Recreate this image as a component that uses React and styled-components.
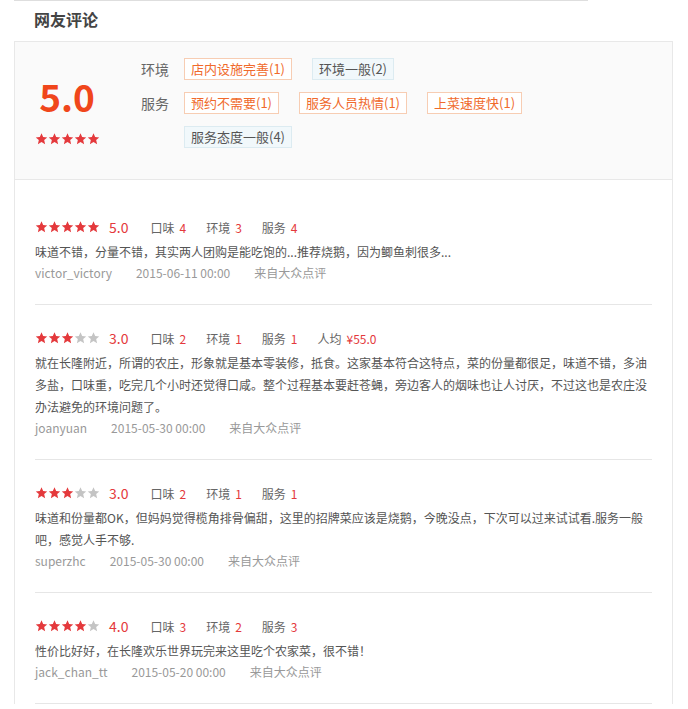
import React from "react";
import styled, { createGlobalStyle } from "styled-components";

const GlobalStyle = createGlobalStyle`
  body {
    margin: 0;
    background: #fff;
    font-family: "Noto Sans CJK SC", "Liberation Sans", sans-serif;
    color: #666;
  }
`;

const Page = styled.div`
  width: 659px;
  padding-left: 14px;
`;

const TopRule = styled.div`
  width: 574px;
  height: 1px;
  background: #dedede;
`;

const Title = styled.h2`
  margin: 0;
  padding: 6px 0 0 20px;
  height: 34px;
  line-height: 24px;
  font-size: 16px;
  font-weight: bold;
  color: #444;
`;

const Panel = styled.div`
  border: 1px solid #e8e8e8;
  border-bottom: none;
`;

const Summary = styled.div`
  display: flex;
  align-items: flex-start;
  gap: 42px;
  padding: 16px 20px 31px;
  background: #fafafa;
  border-bottom: 1px solid #e8e8e8;
`;

const ScoreBox = styled.div`
  width: 64px;
  display: flex;
  flex-direction: column;
  align-items: center;
  gap: 17px;
  margin-top: 18px;
`;

const BigScore = styled.div`
  font-size: 37px;
  line-height: 40px;
  font-weight: bold;
  color: #f0461b;
`;

const Tags = styled.div`
  display: flex;
  flex-direction: column;
  gap: 12px;
`;

const TagRow = styled.div`
  display: flex;
  align-items: flex-start;
`;

const TagLabel = styled.span`
  width: 43px;
  flex-shrink: 0;
  font-size: 14px;
  line-height: 22px;
  color: #666;
`;

const TagWrap = styled.div`
  display: flex;
  flex-wrap: wrap;
  max-width: 380px;
  row-gap: 12px;
`;

const Tag = styled.span`
  box-sizing: border-box;
  height: 22px;
  line-height: 20px;
  padding: 0 6px;
  margin-right: 20px;
  font-size: 13px;
  border: 1px solid ${(p) => (p.$neutral ? "#dcebf1" : "#f7cdb3")};
  background: ${(p) => (p.$neutral ? "#f1f8fb" : "#fff")};
  color: ${(p) => (p.$neutral ? "#555" : "#f06a2c")};
`;

const List = styled.div`
  padding: 14px 20px 0;
`;

const Review = styled.div`
  padding: 23px 0 21px;
  border-bottom: 1px solid #e6e6e6;
`;

const Head = styled.div`
  display: flex;
  align-items: center;
  height: 20px;
  font-size: 12px;
`;

const Stars = styled.span`
  display: inline-flex;
`;

const Score = styled.span`
  margin: 0 22px 0 9px;
  font-size: 14px;
  color: #e4393c;
`;

const Item = styled.span`
  margin-right: 20px;
  color: #666;
  b {
    font-weight: normal;
    color: #e4393c;
    margin-left: 5px;
  }
`;

const Body = styled.p`
  margin: 4px 0 0;
  font-size: 12px;
  line-height: 22px;
  color: #555;
`;

const Meta = styled.div`
  display: flex;
  gap: 24px;
  font-size: 12px;
  line-height: 20px;
  color: #999;
`;

const Star = ({ on, size = 13 }) => (
  <svg width={size} height={size - 1} viewBox="0 0 24 23">
    <path
      d="M12 0.5l3.2 7.2 7.8.7-5.9 5.2 1.8 7.8L12 17.3l-6.9 4.1 1.8-7.8L1 8.4l7.8-.7z"
      fill={on ? "#e4393c" : "#c4c4c4"}
    />
  </svg>
);

const StarBar = ({ n, size }) => (
  <Stars>
    {[0, 1, 2, 3, 4].map((i) => (
      <Star key={i} on={i < n} size={size} />
    ))}
  </Stars>
);

const reviews = [
  {
    stars: 5,
    score: "5.0",
    items: [["口味", "4"], ["环境", "3"], ["服务", "4"]],
    text: "味道不错，分量不错，其实两人团购是能吃饱的...推荐烧鹅，因为鲫鱼刺很多...",
    user: "victor_victory",
    date: "2015-06-11 00:00",
  },
  {
    stars: 3,
    score: "3.0",
    items: [["口味", "2"], ["环境", "1"], ["服务", "1"], ["人均", "¥55.0"]],
    text: "就在长隆附近，所谓的农庄，形象就是基本零装修，抵食。这家基本符合这特点，菜的份量都很足，味道不错，多油多盐，口味重，吃完几个小时还觉得口咸。整个过程基本要赶苍蝇，旁边客人的烟味也让人讨厌，不过这也是农庄没办法避免的环境问题了。",
    user: "joanyuan",
    date: "2015-05-30 00:00",
  },
  {
    stars: 3,
    score: "3.0",
    items: [["口味", "2"], ["环境", "1"], ["服务", "1"]],
    text: "味道和份量都OK，但妈妈觉得榄角排骨偏甜，这里的招牌菜应该是烧鹅，今晚没点，下次可以过来试试看.服务一般吧，感觉人手不够.",
    user: "superzhc",
    date: "2015-05-30 00:00",
  },
  {
    stars: 4,
    score: "4.0",
    items: [["口味", "3"], ["环境", "2"], ["服务", "3"]],
    text: "性价比好好，在长隆欢乐世界玩完来这里吃个农家菜，很不错！",
    user: "jack_chan_tt",
    date: "2015-05-20 00:00",
  },
];

export default function App() {
  return (
    <Page>
      <GlobalStyle />
      <TopRule />
      <Title>网友评论</Title>
      <Panel>
        <Summary>
          <ScoreBox>
            <BigScore>5.0</BigScore>
            <StarBar n={5} size={13} />
          </ScoreBox>
          <Tags>
            <TagRow>
              <TagLabel>环境</TagLabel>
              <TagWrap>
                <Tag>店内设施完善(1)</Tag>
                <Tag $neutral>环境一般(2)</Tag>
              </TagWrap>
            </TagRow>
            <TagRow>
              <TagLabel>服务</TagLabel>
              <TagWrap>
                <Tag>预约不需要(1)</Tag>
                <Tag>服务人员热情(1)</Tag>
                <Tag>上菜速度快(1)</Tag>
                <Tag $neutral>服务态度一般(4)</Tag>
              </TagWrap>
            </TagRow>
          </Tags>
        </Summary>
        <List>
          {reviews.map((r, i) => (
            <Review key={i}>
              <Head>
                <StarBar n={r.stars} size={13} />
                <Score>{r.score}</Score>
                {r.items.map(([k, v]) => (
                  <Item key={k}>
                    {k}
                    <b>{v}</b>
                  </Item>
                ))}
              </Head>
              <Body>{r.text}</Body>
              <Meta>
                <span>{r.user}</span>
                <span>{r.date}</span>
                <span>来自大众点评</span>
              </Meta>
            </Review>
          ))}
        </List>
      </Panel>
    </Page>
  );
}
